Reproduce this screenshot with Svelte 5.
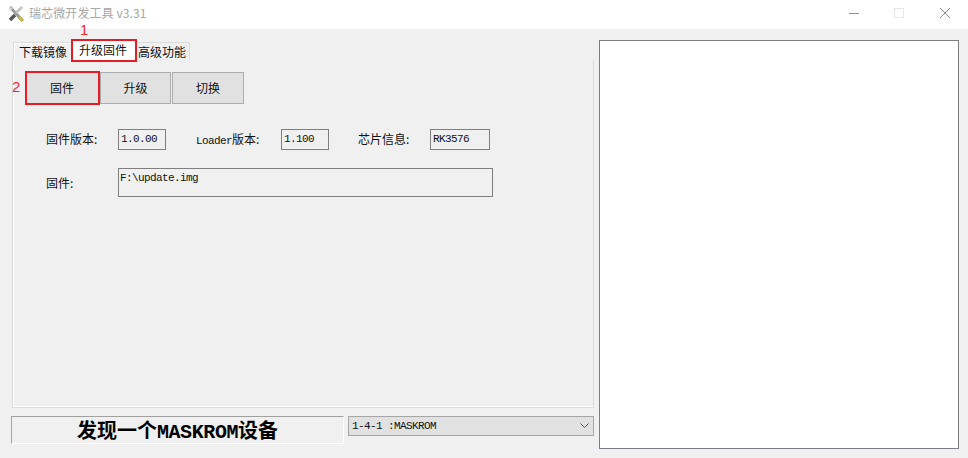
<script>
  const tabs = [
    { label: '下载镜像', active: false },
    { label: '升级固件', active: true },
    { label: '高级功能', active: false },
  ];
  const actions = ['固件', '升级', '切换'];
  const fields = [
    { prefix: '', label: '固件版本:', value: '1.0.00', cls: 'f1' },
    { prefix: 'Loader', label: '版本:', value: '1.100', cls: 'f2' },
    { prefix: '', label: '芯片信息:', value: 'RK3576', cls: 'f3' },
  ];
</script>

<div class="window">
  <header class="titlebar">
    <svg class="logo" width="18" height="18" viewBox="0 0 18 18">
      <path d="M3 2 L15 15" stroke="#9a9a9a" stroke-width="3" />
      <path d="M15 2 L9 8" stroke="#c0c0c0" stroke-width="2.5" />
      <path d="M8 10 L3 15" stroke="#555" stroke-width="3.5" />
      <path d="M12 12 L16 16" stroke="#c9b45a" stroke-width="3.5" />
      <path d="M2 2 L6 3 L3 6 Z" fill="#d8d8d8" />
    </svg>
    <span class="title">瑞芯微开发工具 v3.31</span>
    <div class="controls">
      <svg width="144" height="20" viewBox="0 0 144 20">
        <path d="M29 10.5 H39" stroke="#8a8a8a" />
        <rect x="74.5" y="5.5" width="9" height="9" fill="none" stroke="#e6e6e6" />
        <path d="M120 5 L130 15 M130 5 L120 15" stroke="#8a8a8a" />
      </svg>
    </div>
  </header>

  <main class="body">
    <section class="left">
      <nav class="tabs">
        {#each tabs as tab}
          <div class="tab" class:active={tab.active}>{tab.label}</div>
        {/each}
        <span class="mark mark-1">1</span>
      </nav>

      <div class="panel">
        <div class="actions">
          {#each actions as action, i}
            <button class="action" class:marked={i === 0}>{action}</button>
          {/each}
          <span class="mark mark-2">2</span>
        </div>

        <div class="info">
          {#each fields as field}
            <span class="label {field.cls}">{#if field.prefix}<span class="mono">{field.prefix}</span>{/if}{field.label}</span>
            <span class="value mono {field.cls}">{field.value}</span>
          {/each}
        </div>

        <div class="path-row">
          <span class="label">固件:</span>
          <div class="path mono">F:\update.img</div>
        </div>
      </div>

      <div class="footer">
        <div class="status">发现一个<span class="latin">MASKROM</span>设备</div>
        <div class="device mono">
          <span>1-4-1 :MASKROM</span>
          <svg width="9" height="6" viewBox="0 0 9 6">
            <path d="M0.5 0.5 L4.5 4.5 L8.5 0.5" fill="none" stroke="#5a5a5a" />
          </svg>
        </div>
      </div>
    </section>

    <aside class="log"></aside>
  </main>
</div>

<style>
  :global(body) {
    margin: 0;
    background: #f0f0f0;
  }

  .window {
    width: 968px;
    height: 458px;
    overflow: hidden;
    font-family: "Noto Sans CJK SC", "Liberation Sans", sans-serif;
    font-size: 12px;
    color: #111;
  }

  .titlebar {
    height: 29px;
    background: #fff;
    display: flex;
    align-items: center;
    padding: 0 4px 4px 7px;
    box-sizing: border-box;
  }

  .title {
    margin-left: 4px;
    color: #a6a6a6;
    letter-spacing: 0.1px;
  }

  .logo {
    margin-top: 2px;
  }

  .controls {
    margin-left: auto;
    display: flex;
  }

  .controls svg {
    display: block;
  }

  .body {
    display: flex;
    padding: 11px 0 0 11px;
    gap: 5px;
  }

  .left {
    width: 583px;
  }

  .tabs {
    position: relative;
    display: flex;
    height: 20px;
    padding: 2px 0 0 2px;
    box-sizing: border-box;
  }

  .tab {
    height: 18px;
    line-height: 18px;
    padding: 0 5px;
    border: 1px solid #dcdcdc;
    border-width: 1px 1px 0 1px;
    box-sizing: border-box;
    width: 58px;
    text-align: center;
    white-space: nowrap;
  }

  .tab:first-child {
    border-right: none;
    box-shadow: inset 1px 1px 0 #fff;
  }

  .tab:nth-child(3) {
    width: 53px;
    padding: 0 2px 0 0;
    border-left: none;
  }

  .tab.active {
    position: relative;
    z-index: 2;
    width: 66px;
    height: 23px;
    margin-top: -3px;
    padding: 0 2px 0 0;
    line-height: 18px;
    background: #fff;
    border: 2px solid #e81c24;
  }

  .mark {
    position: absolute;
    color: #ee2a2f;
    font-family: "Liberation Sans", sans-serif;
    font-size: 15px;
    line-height: 16px;
  }

  .mark-1 {
    left: 69px;
    top: -18px;
  }

  .mark-2 {
    left: -14px;
    top: 7px;
  }

  .panel {
    height: 348px;
    margin-left: 1px;
    box-sizing: border-box;
    background: #f0f0f0;
    border: 1px solid #d9d9d9;
    border-top-color: #f0f0f0;
    box-shadow: inset 1px 0 0 #fff, inset 0 -1px 0 #fff;
    padding: 11px 0 0 13px;
  }

  .actions {
    position: relative;
    display: flex;
    gap: 1px;
  }

  .action {
    width: 71px;
    height: 32px;
    padding: 0 0 2px;
    background: #e1e1e1;
    border: 1px solid #adadad;
    border-radius: 0;
    font: inherit;
    color: inherit;
  }

  .action:last-of-type {
    width: 72px;
  }

  .action.marked {
    position: relative;
    z-index: 1;
    width: 73px;
    padding: 0 1px 2px 0;
    outline: 2px solid #e81c24;
    outline-offset: -1px;
  }

  .label {
    white-space: nowrap;
  }

  .mono {
    font-family: "Liberation Mono", "DejaVu Sans Mono", monospace;
    font-size: 11px;
    letter-spacing: -0.6px;
  }

  .info {
    display: grid;
    grid-template-columns: 72px 48px 30px 85px 48px 29px 72px 60px;
    align-items: center;
    height: 21px;
    margin: 25px 0 0 20px;
  }

  .info .label {
    padding-bottom: 3px;
  }

  .value {
    height: 21px;
    line-height: 18px;
    border: 1px solid #7f7f7f;
    box-sizing: border-box;
    padding-left: 2px;
    background: #f0f0f0;
  }

  .label.f1 {
    grid-column: 1;
  }
  .value.f1 {
    grid-column: 2;
  }
  .label.f2 {
    grid-column: 4;
  }
  .value.f2 {
    grid-column: 5;
  }
  .label.f3 {
    grid-column: 7;
  }
  .value.f3 {
    grid-column: 8;
  }

  .path-row {
    display: flex;
    align-items: center;
    margin: 18px 0 0 20px;
  }

  .path-row .label {
    width: 72px;
  }

  .path {
    width: 375px;
    height: 29px;
    box-sizing: border-box;
    border: 1px solid #7f7f7f;
    padding: 2px 0 0 1px;
    line-height: 14px;
  }

  .footer {
    display: flex;
    margin-top: 8px;
    gap: 4px;
  }

  .status {
    width: 333px;
    height: 28px;
    box-sizing: border-box;
    border: 1px solid;
    border-color: #a0a0a0 #fff #fff #a0a0a0;
    text-align: center;
    font-family: "Noto Sans CJK SC", serif;
    font-size: 20px;
    font-weight: 700;
    line-height: 26px;
    color: #000;
  }

  .latin {
    font-family: "Liberation Mono", monospace;
    letter-spacing: -0.4px;
  }

  .device {
    width: 246px;
    height: 20px;
    box-sizing: border-box;
    display: flex;
    align-items: center;
    justify-content: space-between;
    padding: 0 4px 0 3px;
    background: #e1e1e1;
    border: 1px solid #a6a6a6;
  }

  .log {
    width: 360px;
    height: 409px;
    box-sizing: border-box;
    background: #fff;
    border: 1px solid #7d7d83;
  }
</style>
